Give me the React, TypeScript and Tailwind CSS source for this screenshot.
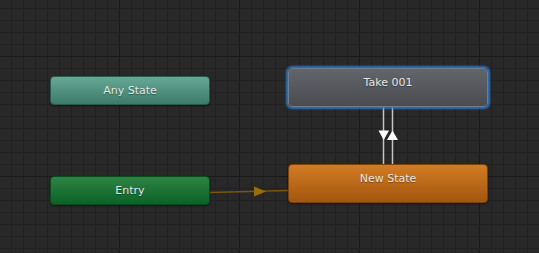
import React from 'react';

type StateNode = {
  label: string;
  x: number;
  y: number;
  w: number;
  h: number;
  className: string;
};

const nodes: StateNode[] = [
  { label: 'Any State', x: 50, y: 76, w: 160, h: 29, className: 'bg-gradient-to-b from-[#66a896] to-[#3d7a6a] border border-[#2a5a4c] shadow-[0_1px_2px_rgba(0,0,0,0.5)]' },
  { label: 'Entry', x: 50, y: 176, w: 160, h: 29, className: 'bg-gradient-to-b from-[#2c8444] to-[#0a6226] border border-[#0a4a1c] shadow-[0_1px_2px_rgba(0,0,0,0.5)]' },
  { label: 'Take 001', x: 288, y: 68, w: 200, h: 39, className: 'bg-gradient-to-b from-[#62656a] to-[#4a4c50] border border-[#6f7d90] shadow-[0_0_2px_2px_rgba(45,125,215,0.85)]' },
  { label: 'New State', x: 288, y: 164, w: 200, h: 39, className: 'bg-gradient-to-b from-[#d27c24] to-[#a4560e] border border-[#7a420a] shadow-[0_1px_2px_rgba(0,0,0,0.5)]' },
];

function Grid() {
  const minorX: number[] = [];
  const minorY: number[] = [];
  for (let x = 11; x < 539; x += 12) minorX.push(x);
  for (let y = 8; y < 253; y += 12) minorY.push(y);

  return (
    <svg className="absolute inset-0" width={539} height={253}>
      {minorX.map((x) => (
        <line key={'vx' + x} x1={x + 0.5} y1={0} x2={x + 0.5} y2={253} stroke={(x - 119) % 120 === 0 ? '#1a1a1a' : '#212121'} strokeWidth={1} />
      ))}
      {minorY.map((y) => (
        <line key={'hy' + y} x1={0} y1={y + 0.5} x2={539} y2={y + 0.5} stroke={(y - 56) % 120 === 0 ? '#1a1a1a' : '#212121'} strokeWidth={1} />
      ))}

      {/* entry -> new state */}
      <line x1={210} y1={192.5} x2={288} y2={190.5} stroke="#7a5608" strokeWidth={1.5} />
      <polygon points="254,186.5 266,191.5 254,196.5" fill="#9a6c0c" />

      {/* take 001 <-> new state */}
      <line x1={383.5} y1={107} x2={383.5} y2={164} stroke="#c4c4c4" strokeWidth={1.5} />
      <line x1={392.5} y1={107} x2={392.5} y2={164} stroke="#c4c4c4" strokeWidth={1.5} />
      <polygon points="378.5,130.5 389,130.5 383.7,140" fill="#ffffff" />
      <polygon points="387,140 398,140 392.5,130.5" fill="#ffffff" />
    </svg>
  );
}

export default function App() {
  return (
    <div className="relative w-[539px] h-[253px] overflow-hidden bg-[#282828] font-['DejaVu_Sans',sans-serif]">
      <Grid />
      {nodes.map((n) => (
        <div
          key={n.label}
          className={`absolute rounded-[4px] flex justify-center pt-[6px] ${n.className}`}
          style={{ left: n.x, top: n.y, width: n.w, height: n.h }}
        >
          <span className="text-[11px] leading-[16px] text-[#e6e6e6] [text-shadow:0_1px_1px_rgba(0,0,0,0.35)]">{n.label}</span>
        </div>
      ))}
    </div>
  );
}
